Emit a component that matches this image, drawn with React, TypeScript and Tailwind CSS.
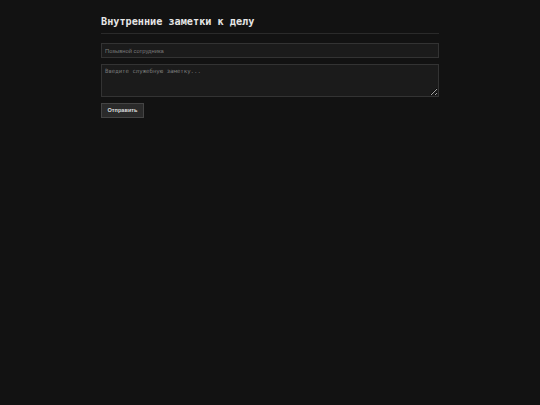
import React from "react";

export default function App() {
  return (
    <div className="min-h-[405px] w-full bg-[#121212]">
      <div className="mx-auto w-[338px] pt-[15px]">
        <h2 className="border-b border-[#2a2a2a] pb-[4px] text-[10.2px] leading-[14px] font-bold text-[#e6e6e6] [font-family:'DejaVu_Sans_Mono',monospace]">
          Внутренние заметки к делу
        </h2>
        <div className="mt-[9px] flex flex-col">
          <input
            type="text"
            placeholder="Позывной сотрудника"
            className="block h-[15px] w-full border border-[#333333] bg-[#1b1b1b] px-[3px] text-[5.8px] text-[#cccccc] outline-none placeholder:text-[#7a7a7a] [font-family:'Liberation_Sans',Arial,sans-serif]"
          />
          <textarea
            placeholder="Введите служебную заметку..."
            className="mt-[6px] block h-[33px] w-full resize-y border border-[#333333] bg-[#1b1b1b] px-[3px] py-[2px] text-[5.7px] leading-[8px] text-[#cccccc] outline-none placeholder:text-[#7a7a7a] [font-family:'DejaVu_Sans_Mono',monospace]"
          />
          <div className="mt-[6px] flex">
            <button className="h-[15px] w-[43px] border border-[#444444] bg-[#2a2a2a] text-[5.6px] font-semibold text-[#dddddd] [font-family:'Liberation_Sans',Arial,sans-serif]">
              Отправить
            </button>
          </div>
        </div>
      </div>
    </div>
  );
}
